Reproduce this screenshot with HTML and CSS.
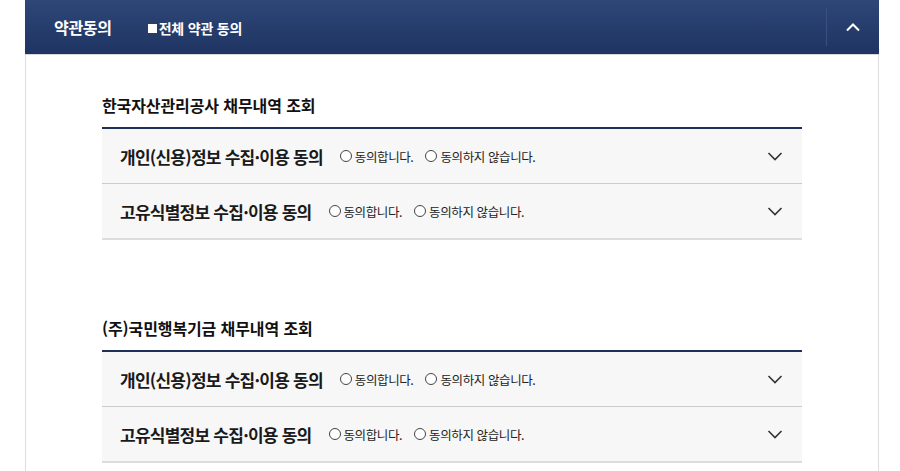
FILE: index.html
```html
<!DOCTYPE html>
<html lang="ko">
<head>
  <meta charset="UTF-8" />
  <meta name="viewport" content="width=device-width, initial-scale=1.0" />
  <title>약관동의</title>
  <link rel="stylesheet" href="styles.css">
</head>
<body>
  <div class="wrap">
    <div class="top">
      <h1>약관동의</h1>
      <label class="all"><span class="sq"></span>전체 약관 동의</label>
      <button class="toggle" aria-label="접기">
        <svg width="16" height="10" viewBox="0 0 16 10"><path d="M2 8.5 L8 2.5 L14 8.5" fill="none" stroke="#fff" stroke-width="2"/></svg>
      </button>
    </div>

    <div class="body">
      <div class="group">
        <h2>한국자산관리공사 채무내역 조회</h2>
        <div class="item">
          <span class="name">개인(신용)정보 수집·이용 동의</span>
          <span class="opt"><i></i>동의합니다.</span>
          <span class="opt"><i></i>동의하지 않습니다.</span>
          <span class="arrow"><svg width="16" height="10" viewBox="0 0 16 10"><path d="M1.5 2 L8 8.5 L14.5 2" fill="none" stroke="#333" stroke-width="1.6"/></svg></span>
        </div>
        <div class="item">
          <span class="name">고유식별정보 수집·이용 동의</span>
          <span class="opt"><i></i>동의합니다.</span>
          <span class="opt"><i></i>동의하지 않습니다.</span>
          <span class="arrow"><svg width="16" height="10" viewBox="0 0 16 10"><path d="M1.5 2 L8 8.5 L14.5 2" fill="none" stroke="#333" stroke-width="1.6"/></svg></span>
        </div>
      </div>

      <div class="group">
        <h2>(주)국민행복기금 채무내역 조회</h2>
        <div class="item">
          <span class="name">개인(신용)정보 수집·이용 동의</span>
          <span class="opt"><i></i>동의합니다.</span>
          <span class="opt"><i></i>동의하지 않습니다.</span>
          <span class="arrow"><svg width="16" height="10" viewBox="0 0 16 10"><path d="M1.5 2 L8 8.5 L14.5 2" fill="none" stroke="#333" stroke-width="1.6"/></svg></span>
        </div>
        <div class="item">
          <span class="name">고유식별정보 수집·이용 동의</span>
          <span class="opt"><i></i>동의합니다.</span>
          <span class="opt"><i></i>동의하지 않습니다.</span>
          <span class="arrow"><svg width="16" height="10" viewBox="0 0 16 10"><path d="M1.5 2 L8 8.5 L14.5 2" fill="none" stroke="#333" stroke-width="1.6"/></svg></span>
        </div>
      </div>
    </div>
  </div>
</body>
</html>
```

FILE: styles.css
```css
body {
  margin: 0;
  background: #fff;
  font-family: "Noto Sans CJK KR", "Noto Sans", sans-serif;
  color: #222;
}
.wrap {
  width: 854px;
  margin-left: 25px;
}
.top {
  display: flex;
  align-items: center;
  height: 54px;
  background: linear-gradient(#2e4777, #1f3462);
  border-bottom: 1px solid #d8d8d8;
  color: #fff;
}
.top h1 {
  margin: 0 0 0 29px;
  font-size: 16px;
  font-weight: 700;
  letter-spacing: -0.3px;
}
.all {
  display: flex;
  align-items: center;
  margin-left: 36px;
  font-size: 14px;
  font-weight: 700;
  letter-spacing: -0.2px;
  margin-top: 2px;
}
.sq {
  width: 9px;
  height: 9px;
  background: #fff;
  margin-right: 2px;
}
.toggle {
  margin-left: auto;
  width: 53px;
  height: 38px;
  border: 0;
  border-left: 1px solid #3a5180;
  background: none;
  display: flex;
  align-items: center;
  justify-content: center;
  padding: 0;
}
.body {
  border-left: 1px solid #ddd;
  border-right: 1px solid #ddd;
  padding: 38px 76px 8px;
}
.group + .group {
  margin-top: 76px;
}
.group h2 {
  margin: 0 0 10px;
  font-size: 16px;
  line-height: 24px;
  font-weight: 700;
  letter-spacing: -0.1px;
  color: #111;
}
.item {
  display: flex;
  align-items: center;
  height: 54px;
  padding: 0 19px 0 18px;
  background: #f7f7f7;
  border-bottom: 1px solid #ccc;
}
.group h2 + .item {
  border-top: 2px solid #1f2f57;
}
.item:last-child {
  border-bottom: 2px solid #ddd;
}
.name {
  font-size: 17px;
  font-weight: 700;
  letter-spacing: -0.75px;
  color: #1a1a1a;
  margin-right: 17px;
}
.opt {
  display: flex;
  align-items: center;
  font-size: 12.5px;
  letter-spacing: -0.4px;
  color: #222;
  margin-right: 12px;
}
.opt i {
  width: 10px;
  height: 10px;
  border: 1px solid #444;
  border-radius: 50%;
  margin-right: 3px;
  background: #fff;
}
.arrow {
  margin-left: auto;
  display: flex;
}
```
